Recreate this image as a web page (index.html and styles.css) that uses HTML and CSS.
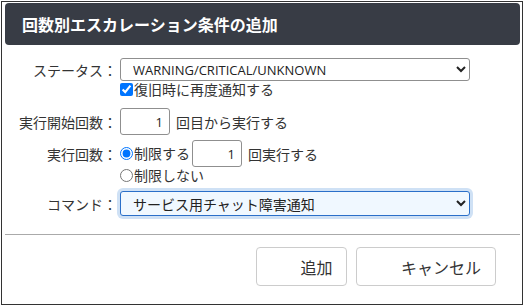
FILE: index.html
```html
<!DOCTYPE html>
<html lang="ja">
  <head>
    <meta charset="UTF-8" />
    <meta name="viewport" content="width=device-width, initial-scale=1.0" />
    <title>回数別エスカレーション条件の追加</title>
    <link rel="stylesheet" href="styles.css">
  </head>
  <body>
    <div class="dialog">
      <div class="dialog-header">回数別エスカレーション条件の追加</div>

      <div class="dialog-body">
        <div class="row row-status">
          <label class="row-label" for="status">ステータス：</label>
          <select id="status" class="select">
            <option>WARNING/CRITICAL/UNKNOWN</option>
          </select>
        </div>
        <div class="row row-sub">
          <label class="check">
            <input type="checkbox" checked />復旧時に再度通知する
          </label>
        </div>

        <div class="row row-start">
          <label class="row-label" for="start">実行開始回数：</label>
          <input id="start" class="num" type="text" value="1" />
          <span class="suffix">回目から実行する</span>
        </div>

        <div class="row row-count">
          <span class="row-label">実行回数：</span>
          <label class="check">
            <input type="radio" name="limit" checked />制限する
          </label>
          <input class="num num-inline" type="text" value="1" />
          <span class="suffix">回実行する</span>
        </div>
        <div class="row row-sub">
          <label class="check">
            <input type="radio" name="limit" />制限しない
          </label>
        </div>

        <div class="row row-command">
          <label class="row-label" for="command">コマンド：</label>
          <select id="command" class="select select-focus">
            <option>サービス用チャット障害通知</option>
          </select>
        </div>
      </div>

      <div class="dialog-footer">
        <button class="btn btn-add">追加</button>
        <button class="btn btn-cancel">キャンセル</button>
      </div>
    </div>
  </body>
</html>
```

FILE: styles.css
```css
html,
body {
  margin: 0;
  padding: 0;
  background: #fff;
}

body {
  font-family: "Noto Sans CJK JP", sans-serif;
  font-size: 14px;
  color: #333;
}

.dialog {
  box-sizing: border-box;
  width: 522px;
  height: 304px;
  margin: 1px 0 0 1px;
  border: 1px solid #333;
}

.dialog-header {
  height: 42px;
  margin: 1px 2px 0 3px;
  padding-left: 17px;
  border-radius: 4px;
  background: #383c45;
  color: #fff;
  font-size: 16px;
  font-weight: bold;
  line-height: 42px;
}

.dialog-body {
  padding-top: 13px;
  padding-bottom: 18px;
  margin: 0 2px 0 3px;
  border-bottom: 1px solid #aaa;
}

.row {
  display: flex;
  align-items: center;
}

.row-label {
  box-sizing: border-box;
  width: 112px;
  margin-right: 3px;
  text-align: right;
  white-space: nowrap;
  line-height: 20px;
}

.row-sub {
  height: 17px;
  padding-left: 115px;
}

.row-start {
  margin-top: 10px;
}

.row-count {
  margin-top: 5px;
}

.row-command {
  margin-top: 7px;
}

.select {
  box-sizing: border-box;
  width: 350px;
  height: 23px;
  padding: 0 4px 0 8px;
  border: 1px solid #8f8f8f;
  border-radius: 3px;
  background: #fff;
  color: #222;
  font-family: "Open Sans", "Noto Sans CJK JP", sans-serif;
  font-size: 13px;
}

.select-focus {
  height: 25px;
  border-color: #2a6fc9;
  background: #f0f8ff;
  box-shadow: 0 0 0 3px #cfe1f5;
  outline: none;
  font-family: "Noto Sans CJK JP", sans-serif;
  font-size: 14px;
}

.check {
  display: flex;
  align-items: center;
  white-space: nowrap;
  line-height: 17px;
}

.check input {
  width: 13px;
  height: 13px;
  margin: 0 1px 0 0;
}

.num {
  box-sizing: border-box;
  width: 50px;
  height: 27px;
  padding: 0 6px;
  border: 1px solid #8f8f8f;
  border-radius: 3px;
  text-align: right;
  color: #222;
  font-family: "Open Sans", sans-serif;
  font-size: 13px;
}

.num-inline {
  margin-left: 2px;
}

.suffix {
  margin-left: 6px;
}

.dialog-footer {
  display: flex;
  justify-content: flex-end;
  gap: 9px;
  padding: 12px 26px 0 0;
}

.btn {
  box-sizing: border-box;
  height: 39px;
  padding: 0 0 0 30px;
  border: 1px solid #ccc;
  border-radius: 4px;
  background: #fff;
  color: #333;
  font-family: "Noto Sans CJK JP", sans-serif;
  font-size: 16px;
}

.btn-add {
  width: 91px;
}

.btn-cancel {
  width: 140px;
}
```
